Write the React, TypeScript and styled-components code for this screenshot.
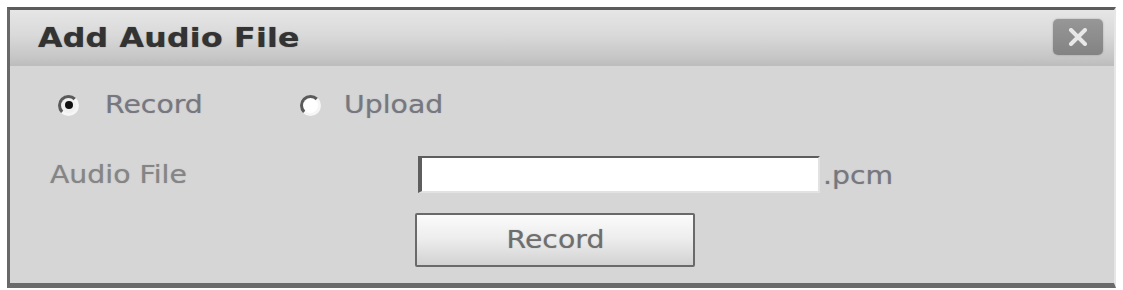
import React from "react";
import styled, { createGlobalStyle } from "styled-components";

const Global = createGlobalStyle`
  html, body { margin: 0; padding: 0; background: #ffffff; }
  body { font-family: "DejaVu Sans", Verdana, sans-serif; }
`;

const Dialog = styled.div`
  margin: 7px 0 0 7px;
  width: 1109px;
  height: 281px;
  box-sizing: border-box;
  border-top: 3px solid #5c5c5c;
  border-left: 3px solid #686868;
  border-bottom: 5px solid #6a6a6a;
  border-right: 2px solid #e6e6e6;
  background: #d6d6d6;
  display: flex;
  flex-direction: column;
`;

const Header = styled.div`
  height: 56px;
  box-sizing: border-box;
  padding: 0 11px 0 28px;
  display: flex;
  align-items: center;
  justify-content: space-between;
  background: linear-gradient(#e6e6e6 0%, #d9d9d9 45%, #c6c6c6 85%, #bcbcbc 100%);
`;

const Title = styled.h1`
  margin: 0 0 2px 0;
  font-family: "DejaVu Sans", Verdana, sans-serif;
  font-size: 27px;
  font-weight: bold;
  letter-spacing: 0.2px;
  color: #333333;
  transform: scaleX(1.17);
  transform-origin: left center;
  text-shadow: 0 0 1px rgba(40, 40, 40, 0.6);
`;

const CloseButton = styled.button`
  width: 50px;
  height: 36px;
  margin-top: -2px;
  padding: 0;
  border: none;
  border-radius: 5px;
  background: linear-gradient(#979797, #838383);
  box-shadow: 0 0 2px rgba(0, 0, 0, 0.25);
  display: flex;
  align-items: center;
  justify-content: center;
`;

const Body = styled.div`
  padding: 19px 0 0 40px;
  display: flex;
  flex-direction: column;
`;

const RadioRow = styled.div`
  height: 40px;
  padding-left: 8px;
  display: flex;
  align-items: center;
  gap: 92px;
`;

const Option = styled.label<{ $gap: number; $width: number }>`
  display: flex;
  align-items: center;
  gap: ${(p) => p.$gap}px;
  width: ${(p) => p.$width}px;
`;

const RadioDot = styled.span<{ $checked?: boolean }>`
  width: 21px;
  height: 21px;
  flex: none;
  box-sizing: border-box;
  border-radius: 50%;
  border: 3px solid;
  border-color: #5a5a5a #f6f6f6 #f6f6f6 #5a5a5a;
  background: ${(p) => (p.$checked ? "#f0f0f0" : "#ffffff")};
  display: flex;
  align-items: center;
  justify-content: center;
  &::after {
    content: "";
    width: 8px;
    height: 8px;
    border-radius: 50%;
    background: ${(p) => (p.$checked ? "#111" : "transparent")};
  }
`;

const Text = styled.span<{ $color?: string }>`
  display: inline-block;
  font-family: "DejaVu Sans", Verdana, sans-serif;
  font-size: 24px;
  color: ${(p) => p.$color || "#77777f"};
  transform: scaleX(1.18);
  transform-origin: left center;
  text-shadow: 0 0 1px rgba(110, 110, 120, 0.5);
  white-space: nowrap;
`;

const FormRow = styled.div`
  margin-top: 31px;
  display: grid;
  grid-template-columns: 368px 402px auto;
  align-items: center;
`;

const FileInput = styled.input`
  width: 402px;
  height: 37px;
  box-sizing: border-box;
  border: 2px solid;
  border-left-width: 4px;
  border-color: #5e5e5e #e2e2e2 #e2e2e2 #5e5e5e;
  background: #ffffff;
  outline: none;
  padding: 0 6px;
`;

const Suffix = styled(Text)`
  margin-left: 3px;
  margin-top: 2px;
`;

const ButtonRow = styled.div`
  margin-top: 20px;
  padding-left: 365px;
  display: flex;
`;

const RecordButton = styled.button`
  width: 280px;
  height: 54px;
  box-sizing: border-box;
  border: 2px solid #6a6a6a;
  border-radius: 2px;
  background: linear-gradient(#fbfbfb 0%, #ececec 50%, #d2d2d2 100%);
  padding: 0;
  display: flex;
  align-items: center;
  justify-content: center;
`;

const ButtonLabel = styled.span`
  font-family: "DejaVu Sans", Verdana, sans-serif;
  font-size: 24px;
  color: #6e6e6e;
  transform: scaleX(1.18);
  text-shadow: 0 0 1px rgba(100, 100, 100, 0.5);
`;

export default function App() {
  return (
    <>
      <Global />
      <Dialog>
        <Header>
          <Title>Add Audio File</Title>
          <CloseButton aria-label="Close">
            <svg width="22" height="18" viewBox="0 0 22 18">
              <path d="M4 2 L18 16 M18 2 L4 16" stroke="#e8e8e8" strokeWidth="4" strokeLinecap="round" />
            </svg>
          </CloseButton>
        </Header>
        <Body>
          <RadioRow>
            <Option $gap={26} $width={150}>
              <RadioDot $checked />
              <Text>Record</Text>
            </Option>
            <Option $gap={23} $width={150}>
              <RadioDot />
              <Text>Upload</Text>
            </Option>
          </RadioRow>
          <FormRow>
            <Text $color="#858585">Audio File</Text>
            <FileInput readOnly value="" />
            <Suffix>.pcm</Suffix>
          </FormRow>
          <ButtonRow>
            <RecordButton>
              <ButtonLabel>Record</ButtonLabel>
            </RecordButton>
          </ButtonRow>
        </Body>
      </Dialog>
    </>
  );
}
